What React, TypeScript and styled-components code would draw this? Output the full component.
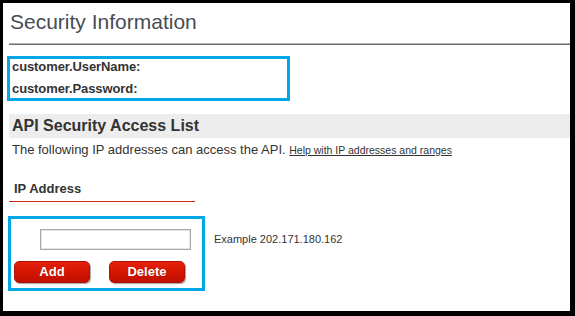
import React from "react"
import styled, { createGlobalStyle } from "styled-components"

const GlobalStyle = createGlobalStyle`
  html, body {
    margin: 0;
    padding: 0;
    background: #000;
  }
  body {
    font-family: "Liberation Sans", Arial, sans-serif;
    color: #333;
  }
`

type ButtonSpec = {
  label: string
}

const buttons: ButtonSpec[] = [{ label: "Add" }, { label: "Delete" }]

export default function App() {
  return (
    <>
      <GlobalStyle />
      <Panel>
        <Title>Security Information</Title>
        <Rule />
        <CredentialsBox>
          <CredentialLine>customer.UserName:</CredentialLine>
          <CredentialLine>customer.Password:</CredentialLine>
        </CredentialsBox>
        <SectionBand>API Security Access List</SectionBand>
        <Description>
          The following IP addresses can access the API. <HelpLink href="#">Help with IP addresses and ranges</HelpLink>
        </Description>
        <ColumnHeader>IP Address</ColumnHeader>
        <EntryRow>
          <EntryBox>
            <IpInput type="text" />
            <ButtonRow>
              {buttons.map(b => (
                <RedButton key={b.label}>{b.label}</RedButton>
              ))}
            </ButtonRow>
          </EntryBox>
          <Example>Example 202.171.180.162</Example>
        </EntryRow>
      </Panel>
    </>
  )
}

const Panel = styled.div`
  margin: 3px 5px 5px 3px;
  width: 567px;
  height: 308px;
  background: #fff;
  display: flex;
  flex-direction: column;
  overflow: hidden;
`

const Title = styled.h1`
  margin: 6px 0 0 7px;
  font-size: 21px;
  line-height: 26px;
  font-weight: 400;
  color: #474c55;
`

const Rule = styled.div`
  margin: 8px 0 0 6px;
  border-top: 1px solid #b4b4b4;
  border-bottom: 1px solid #6e6e6e;
`

const CredentialsBox = styled.div`
  margin: 11px 0 0 4px;
  width: 275px;
  border: 3px solid #00a6e6;
  padding: 0 0 1px 2px;
  display: flex;
  flex-direction: column;
  gap: 6px;
`

const CredentialLine = styled.div`
  font-size: 13px;
  line-height: 16px;
  font-weight: 700;
  color: #333;
  letter-spacing: -0.1px;
`

const SectionBand = styled.div`
  margin: 13px 0 0 6px;
  height: 24px;
  padding-left: 3px;
  background: #ededed;
  font-size: 16px;
  line-height: 24px;
  font-weight: 700;
  color: #333;
`

const Description = styled.div`
  margin: 4px 0 0 9px;
  font-size: 13px;
  line-height: 16px;
  color: #333;
  white-space: nowrap;
`

const HelpLink = styled.a`
  font-size: 10.5px;
  color: #333;
  text-decoration: underline;
`

const ColumnHeader = styled.div`
  margin: 23px 0 0 6px;
  width: 181px;
  padding: 0 0 4px 5px;
  border-bottom: 1px solid #d42a14;
  font-size: 13px;
  line-height: 16px;
  font-weight: 700;
  color: #333;
`

const EntryRow = styled.div`
  margin: 14px 0 0 5px;
  display: flex;
  align-items: flex-start;
  gap: 9px;
`

const EntryBox = styled.div`
  width: 191px;
  border: 3px solid #00a6e6;
  padding: 10px 0 5px;
  display: flex;
  flex-direction: column;
  gap: 11px;
`

const IpInput = styled.input`
  box-sizing: border-box;
  margin-left: 29px;
  width: 151px;
  height: 21px;
  border: 1px solid #a8a8a8;
  box-shadow: inset 0 0 0 1px #e4e4e4;
  outline: none;
  padding: 0 4px;
`

const ButtonRow = styled.div`
  display: flex;
  gap: 19px;
  margin-left: 3px;
`

const RedButton = styled.button`
  box-sizing: border-box;
  width: 76px;
  height: 22px;
  border: 1px solid #b01200;
  border-radius: 5px;
  background: linear-gradient(#e4220a, #d01400 60%, #c01000);
  box-shadow: 1px 1px 1px rgba(0, 0, 0, 0.35);
  color: #fff;
  font-family: "Liberation Sans", Arial, sans-serif;
  font-size: 13px;
  font-weight: 700;
  line-height: 20px;
  padding: 0;
  text-shadow: 0 0 1px rgba(120, 0, 0, 0.6);
  cursor: pointer;
`

const Example = styled.div`
  margin-top: 17px;
  font-size: 11px;
  line-height: 13px;
  color: #333;
`
